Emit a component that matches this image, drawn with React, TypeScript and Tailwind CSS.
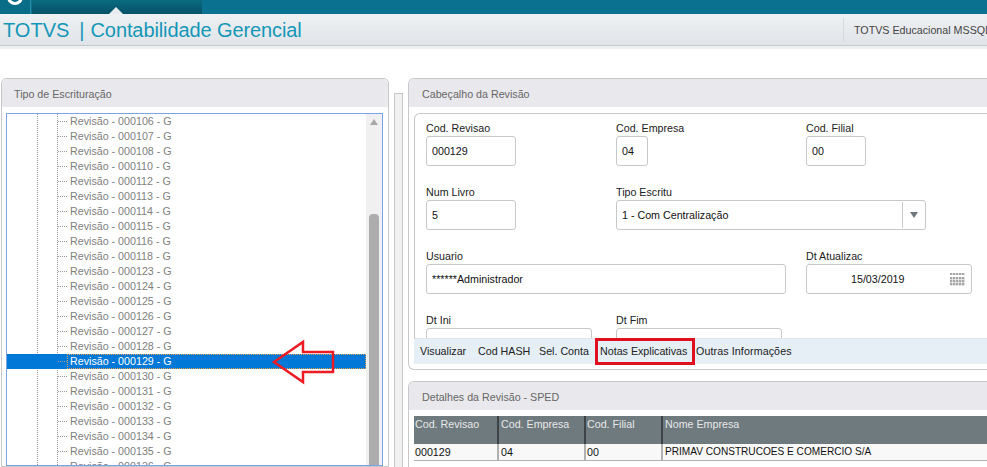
const revisions = ["106","107","108","110","112","113","114","115","116","118","123","124","125","126","127","128","129","130","131","132","133","134","135","136"];

function Field({ label, value, w, col, align, right }: { label: string; value?: string; w: string; col?: string; align?: string; right?: React.ReactNode }) {
  return (
    <div className={`flex flex-col shrink-0 ${col ?? ""}`}>
      <div className="h-[16px] text-[10.7px] leading-[16px] text-[#222] whitespace-nowrap">{label}</div>
      <div className={`h-[30px] ${w} border border-[#c8c8c8] rounded-[3px] bg-white flex items-center text-[10.7px] text-[#111] ${align ?? "pl-[5px]"} relative`}>
        <span>{value}</span>
        {right}
      </div>
    </div>
  );
}

function Calendar() {
  return (
    <svg width="15" height="14" viewBox="0 0 15 14" className="absolute right-[6px] top-[8px]">
      {[0, 3, 6, 9, 12].map((x) => [0, 4, 7, 10].map((y) => (
        <rect key={`${x}-${y}`} x={x} y={y} width="2.4" height={y === 0 ? 2 : 2.4} fill="#a6a6a6" />
      )))}
    </svg>
  );
}

function Row({ children }: { children: React.ReactNode }) {
  return <div className="flex h-[64px] shrink-0">{children}</div>;
}

export default function App() {
  return (
    <div className="w-[987px] h-[467px] overflow-hidden bg-white relative font-['Liberation_Sans',Arial,sans-serif]">
      {/* top bar */}
      <div className="h-[14px] bg-[#0a7290] flex">
        <div className="w-[31px] bg-[#0a6d88] border-r border-[#2d8ba3] flex justify-center overflow-hidden">
          <div className="w-[16px] h-[16px] -mt-[11px] rounded-full border-[3px] border-white" />
        </div>
        <div className="w-[170px] ml-[1px] bg-gradient-to-b from-[#0a6a80] to-[#055268] relative flex justify-center">
          <div className="absolute left-[77px] bottom-0 w-0 h-0 border-l-[7px] border-r-[7px] border-b-[7px] border-l-transparent border-r-transparent border-b-[#e9ecef]" />
        </div>
      </div>
      {/* title bar */}
      <div className="h-[32px] bg-gradient-to-b from-[#eff1f3] to-[#e0e4e8] border-b border-[#c6cacc] flex items-center justify-between">
        <div className="pl-[3px] text-[20px] leading-[32px] text-[#1497b8] flex whitespace-nowrap">
          <span>TOTVS</span>
          <span className="ml-[10px]">|</span>
          <span className="ml-[6px] tracking-[-0.1px]">Contabilidade Gerencial</span>
        </div>
        <div className="h-[24px] border-l border-[#d6d9dc] pl-[10px] w-[144px] shrink-0 whitespace-nowrap overflow-hidden text-[10.7px] leading-[24px] text-[#444]">TOTVS Educacional MSSQL</div>
      </div>
      <div className="h-[3px] bg-[#eeeff1]" />
      {/* main */}
      <div className="flex pt-[29px] pl-[1px] h-[418px] overflow-hidden">
        {/* left panel */}
        <div className="w-[388px] shrink-0 border border-[#c8c8c8] rounded-t-[5px] flex flex-col">
          <div className="h-[28px] shrink-0 bg-[#e9e9ed] rounded-t-[5px] pl-[12px] text-[10.7px] leading-[31px] text-[#666]">Tipo de Escrituração</div>
          <div className="ml-[4px] mr-[5px] mt-[6px] flex-1 border border-[#7da2e8] flex overflow-hidden">
            <div className="flex-1 relative overflow-hidden">
              <div className="absolute left-[30px] top-0 bottom-0 border-l border-dotted border-[#999]" />
              <div className="absolute left-[50px] top-0 bottom-0 border-l border-dotted border-[#999]" />
              {revisions.map((r) => {
                const sel = r === "129";
                return (
                  <div key={r} className={`h-[15px] flex items-center relative ${sel ? "bg-[#0078d7]" : ""}`}>
                    <div className="ml-[51px] w-[9px] border-t border-dotted border-[#999] shrink-0" />
                    <div className={`pl-[3px] h-full flex-1 text-[10.7px] leading-[15px] ${sel ? "text-white outline-1 outline-dotted outline-[#e8a050] -outline-offset-1" : "text-[#808080]"}`}>
                      Revisão - 000{r} - G
                    </div>
                  </div>
                );
              })}
            </div>
            <div className="w-[16px] shrink-0 bg-[#f0f0f0] relative flex flex-col items-center">
              <div className="mt-[5px] w-0 h-0 border-l-[4px] border-r-[4px] border-b-[6px] border-l-transparent border-r-transparent border-b-[#a8a8a8]" />
              <div className="absolute left-[3px] top-[100px] bottom-0 w-[10px] bg-[#adadad] rounded-t-[4px]" />
            </div>
          </div>
        </div>
        {/* splitter */}
        <div className="w-[9px] ml-[5px] mt-[15px] shrink-0 bg-[#f0f0f0] border border-[#c8c8c8] border-b-0" />
        {/* right column */}
        <div className="ml-[5px] flex-1 flex flex-col min-w-0">
          <div className="h-[292px] shrink-0 border border-[#c8c8c8] border-r-0 rounded-l-[6px] flex flex-col">
            <div className="h-[28px] shrink-0 bg-[#e9e9ed] rounded-tl-[5px] pl-[13px] text-[10.7px] leading-[31px] text-[#666]">Cabeçalho da Revisão</div>
            <div className="ml-[5px] mt-[6px] flex-1 min-h-0 border border-[#c8c8c8] border-r-0 border-b-[#e4e4e4] rounded-tl-[6px] overflow-hidden pl-[11px] pt-[6px]">
              <Row>
                <Field label="Cod. Revisao" value="000129" w="w-[90px]" col="w-[190px]" />
                <Field label="Cod. Empresa" value="04" w="w-[32px]" col="w-[190px]" />
                <Field label="Cod. Filial" value="00" w="w-[60px]" />
              </Row>
              <Row>
                <Field label="Num Livro" value="5" w="w-[90px]" col="w-[190px]" />
                <Field
                  label="Tipo Escritu"
                  value="1 - Com Centralização"
                  w="w-[310px]"
                  right={
                    <div className="absolute right-0 top-[1px] bottom-[1px] w-[23px] border-l border-[#c8c8c8] flex items-center justify-center">
                      <div className="w-0 h-0 border-l-[4px] border-r-[4px] border-t-[6px] border-l-transparent border-r-transparent border-t-[#6f7780]" />
                    </div>
                  }
                />
              </Row>
              <Row>
                <Field label="Usuario" value="******Administrador" w="w-[360px]" col="w-[380px]" />
                <Field label="Dt Atualizac" value="15/03/2019" w="w-[166px]" align="pl-[44px]" right={<Calendar />} />
              </Row>
              <Row>
                <Field label="Dt Ini" w="w-[166px]" col="w-[190px]" right={<div className="absolute right-[6px] top-[9px] w-[15px] h-[1px] bg-[#a6a6a6]" />} />
                <Field label="Dt Fim" w="w-[166px]" right={<div className="absolute right-[6px] top-[9px] w-[15px] h-[1px] bg-[#a6a6a6]" />} />
              </Row>
            </div>
            <div className="ml-[5px] mb-[5px] h-[25px] shrink-0 bg-[#e6eef6] flex items-center text-[10.7px] text-[#222] pl-[6px] relative whitespace-nowrap">
              <span className="w-[58px]">Visualizar</span>
              <span className="w-[61px]">Cod HASH</span>
              <span className="w-[61px]">Sel. Conta</span>
              <span className="w-[96px]">Notas Explicativas</span>
              <span className="tracking-[0.1px]">Outras Informações</span>
              <div className="absolute left-[181px] -top-[1px] w-[100px] h-[27px] border-[3px] border-[#e0111f]" />
            </div>
          </div>
          <div className="mt-[11px] flex-1 border border-[#c8c8c8] border-r-0 border-b-0 rounded-tl-[6px] flex flex-col">
            <div className="h-[28px] shrink-0 bg-[#e9e9ed] rounded-tl-[5px] pl-[13px] text-[10.7px] leading-[31px] text-[#666]">Detalhes da Revisão - SPED</div>
            <div className="ml-[5px] mt-[6px] text-[10.7px]">
              <div className="h-[28px] bg-[#6e7a7e] text-[#e8e8e8] flex leading-[17px]">
                <div className="w-[85px] pl-[1px] border-r-2 border-[#3c4447]">Cod. Revisao</div>
                <div className="w-[87px] pl-[2px] border-r-2 border-[#3c4447]">Cod. Empresa</div>
                <div className="w-[77px] pl-[1px] border-r-2 border-[#3c4447]">Cod. Filial</div>
                <div className="flex-1 pl-[2px]">Nome Empresa</div>
              </div>
              <div className="h-[17px] flex bg-[#f8f8f8] border-b border-[#b0b0b0] text-[#111] leading-[16px]">
                <div className="w-[85px] pl-[1px] border-r-2 border-[#b0b0b0]">000129</div>
                <div className="w-[87px] pl-[2px] border-r-2 border-[#b0b0b0]">04</div>
                <div className="w-[77px] pl-[1px] border-r-2 border-[#b0b0b0]">00</div>
                <div className="flex-1 pl-[2px] text-[10.1px]">PRIMAV CONSTRUCOES E COMERCIO S/A</div>
              </div>
            </div>
          </div>
        </div>
      </div>
      {/* annotation arrow */}
      <svg className="absolute left-[270px] top-[338px]" width="68" height="48" viewBox="270 338 68 48">
        <polygon points="274,362 303,342 303,352 333,352 333,372 303,372 303,382" fill="none" stroke="#ed1c24" strokeWidth="2.5" />
      </svg>
    </div>
  );
}
